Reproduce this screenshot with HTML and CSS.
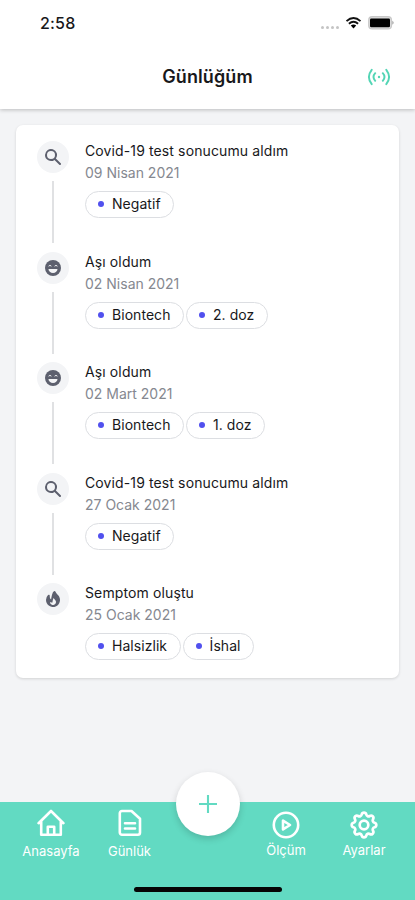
FILE: index.html
```html
<!DOCTYPE html>
<html lang="tr">
<head>
<meta charset="utf-8">
<meta name="viewport" content="width=device-width, initial-scale=1">
<title>Günlüğüm</title>
<link rel="stylesheet" href="styles.css">
</head>
<body>
<svg class="defs" aria-hidden="true">
  <symbol id="search" viewBox="0 0 20 20"><path fill-rule="evenodd" d="M8 4a4 4 0 100 8 4 4 0 000-8zM2 8a6 6 0 1110.89 3.476l4.817 4.817a1 1 0 01-1.414 1.414l-4.816-4.816A6 6 0 012 8z"/></symbol>
  <symbol id="smile" viewBox="0 0 20 20"><circle cx="10" cy="10" r="8"/><path d="M5.6 8.2q1.3-1.7 2.8 0M11.6 8.2q1.3-1.7 2.8 0" fill="none" stroke="#f3f4f6" stroke-width="1"/><path d="M5.5 11h9a4.5 4 0 01-9 0z" fill="#f3f4f6"/></symbol>
  <symbol id="fire" viewBox="0 0 20 20"><path fill-rule="evenodd" d="M12.395 2.553a1 1 0 00-1.45-.385c-.345.23-.614.558-.822.88-.214.33-.403.713-.57 1.116-.334.804-.614 1.768-.84 2.734a31.365 31.365 0 00-.613 3.58 2.64 2.64 0 01-.945-1.067c-.328-.68-.398-1.534-.398-2.654A1 1 0 005.05 6.05 6.981 6.981 0 003 11a7 7 0 1011.95-4.95c-.592-.591-.98-.985-1.348-1.467-.363-.476-.724-1.063-1.207-2.03zM12.12 15.12A3 3 0 017 13s.879.5 2.5.5c0-1 .5-4 1.25-4.5.5 1 .786 1.293 1.371 1.879A2.99 2.99 0 0113 13a2.99 2.99 0 01-.879 2.121z"/></symbol>
</svg>
<div class="screen">
  <header class="header">
    <div class="status">
      <span class="time">2:58</span>
      <div class="indicators">
        <span class="signal"><i></i><i></i><i></i><i></i></span>
        <svg class="wifi" viewBox="0 0 16 12"><path d="M1 4.1Q8-2.1 15 4.1M3.4 6.7Q8 2.7 12.6 6.7" fill="none" stroke="#111" stroke-width="1.9"/><path d="M5.3 8.6Q8 6.4 10.7 8.6L8 11.6z"/></svg>
        <svg class="battery" viewBox="0 0 27 14"><rect x=".7" y=".7" width="22.8" height="12.2" rx="3.5" fill="#ddd" stroke="#c8c8c8" stroke-width="1.2"/><rect x="2" y="2.6" width="20" height="8.6" rx="1.2"/><path d="M24.4 4.8q2.4 2 0 4z" fill="#999"/></svg>
      </div>
    </div>
    <div class="titlebar">
      <h1>Günlüğüm</h1>
      <svg class="radio" viewBox="0 0 24 18"><g fill="none" stroke="#53d5b5" stroke-width="1.9" stroke-linecap="round"><path d="M4.7 1.8Q-.9 9 4.7 16.2M19.3 1.8Q24.9 9 19.3 16.2M8.2 5.2Q4.8 9 8.2 12.8M15.8 5.2Q19.2 9 15.8 12.8"/></g><circle cx="12" cy="9" r="1.2" fill="#53d5b5"/></svg>
    </div>
  </header>
  <main>
    <ol class="card">
      <li class="entry">
        <div class="rail"><span class="marker"><svg><use href="#search"/></svg></span></div>
        <div class="body"><h2>Covid-19 test sonucumu aldım</h2><time>09 Nisan 2021</time><div class="tags"><span class="tag">Negatif</span></div></div>
      </li>
      <li class="entry">
        <div class="rail"><span class="marker"><svg><use href="#smile"/></svg></span></div>
        <div class="body"><h2>Aşı oldum</h2><time>02 Nisan 2021</time><div class="tags"><span class="tag">Biontech</span><span class="tag">2. doz</span></div></div>
      </li>
      <li class="entry">
        <div class="rail"><span class="marker"><svg><use href="#smile"/></svg></span></div>
        <div class="body"><h2>Aşı oldum</h2><time>02 Mart 2021</time><div class="tags"><span class="tag">Biontech</span><span class="tag">1. doz</span></div></div>
      </li>
      <li class="entry">
        <div class="rail"><span class="marker"><svg><use href="#search"/></svg></span></div>
        <div class="body"><h2>Covid-19 test sonucumu aldım</h2><time>27 Ocak 2021</time><div class="tags"><span class="tag">Negatif</span></div></div>
      </li>
      <li class="entry">
        <div class="rail"><span class="marker"><svg><use href="#fire"/></svg></span></div>
        <div class="body"><h2>Semptom oluştu</h2><time>25 Ocak 2021</time><div class="tags"><span class="tag">Halsizlik</span><span class="tag">İshal</span></div></div>
      </li>
    </ol>
  </main>
  <nav class="nav">
    <a class="tab"><svg viewBox="0 0 28 28"><path d="M1.6 14.2 14 2l12.4 12.2M4.2 12.5v13.2h19.6V12.5M10.8 25.5v-7.8h6.4v7.8"/></svg><span>Anasayfa</span></a>
    <a class="tab"><svg viewBox="0 0 28 28"><path d="M6 2h9.5L24 9.8v13.7a2.2 2.2 0 0 1-2.2 2.2H6a2.2 2.2 0 0 1-2.2-2.2V4.2A2.2 2.2 0 0 1 6 2zM9 14.3h10M9 19.5h10"/></svg><span>Günlük</span></a>
    <button class="add" aria-label="Ekle"><svg viewBox="0 0 20 20"><path d="M10 1v18M1 10h18"/></svg></button>
    <a class="tab low"><svg viewBox="0 0 28 28"><circle cx="14" cy="14" r="12.2"/><path d="M11 9.6v8.8l7-4.4z"/></svg><span>Ölçüm</span></a>
    <a class="tab low"><svg viewBox="0 0 24 24"><path stroke-width="2" d="M10.325 4.317c.426-1.756 2.924-1.756 3.35 0a1.724 1.724 0 002.573 1.066c1.543-.94 3.31.826 2.37 2.37a1.724 1.724 0 001.065 2.572c1.756.426 1.756 2.924 0 3.35a1.724 1.724 0 00-1.066 2.573c.94 1.543-.826 3.31-2.37 2.37a1.724 1.724 0 00-2.572 1.065c-.426 1.756-2.924 1.756-3.35 0a1.724 1.724 0 00-2.573-1.066c-1.543.94-3.31-.826-2.37-2.37a1.724 1.724 0 00-1.065-2.572c-1.756-.426-1.756-2.924 0-3.35a1.724 1.724 0 001.066-2.573c-.94-1.543.826-3.31 2.37-2.37.996.608 2.296.07 2.572-1.065z" transform="translate(-2.04 -2.04) scale(1.17)"/><circle cx="12" cy="12" r="3.7" stroke-width="2.3"/></svg><span>Ayarlar</span></a>
    <div class="home-indicator"></div>
  </nav>
</div>
</body>
</html>
```
FILE: styles.css
```css
* { box-sizing: border-box; }
body { margin: 0; font-family: Inter, "Liberation Sans", sans-serif; color: #18181b; }
h1, h2, ol { margin: 0; padding: 0; }
.defs { display: none; }
.screen { height: 900px; display: flex; flex-direction: column; background: #f3f4f6; overflow: hidden; }
.header { height: 109px; background: #fff; box-shadow: 0 1px 4px rgba(0, 0, 0, .23); }
.status { height: 46px; padding: 0 20px 0 40px; display: flex; align-items: center; justify-content: space-between; }
.time { font-size: 16px; font-weight: 500; letter-spacing: .2px; }
.indicators { display: flex; align-items: center; }
.signal { display: flex; gap: 2px; padding: 8px 6px 0 0; }
.signal i { width: 3px; height: 3px; border-radius: 50%; background: #c4c4c4; }
.wifi { width: 17px; height: 12px; margin-right: 6px; }
.battery { width: 27px; height: 14px; }
.titlebar { height: 62px; padding: 0 24px; display: grid; grid-template-columns: 1fr auto 1fr; align-items: center; }
.titlebar h1 { grid-column: 2; font-size: 18px; line-height: 24px; font-weight: 600; letter-spacing: .1px; }
.radio { width: 24px; height: 18px; justify-self: end; }
main { flex: 1; padding: 16px; }
.card { height: 553px; list-style: none; background: #fff; border-radius: 7px; padding: 16px 20px; box-shadow: 0 1px 3px rgba(0, 0, 0, .14); }
.entry { height: 110.5px; display: flex; gap: 16px; }
.rail { width: 33px; display: flex; flex-direction: column; align-items: center; }
.marker { flex: none; width: 32px; height: 32px; border-radius: 50%; background: #f3f4f6; display: flex; align-items: center; justify-content: center; }
.marker svg { width: 20px; height: 20px; fill: #5d606e; }
.rail::after { content: ""; width: 2px; height: 62px; margin-top: 8px; background: #e0e1e3; }
.entry:last-child .rail::after { display: none; }
.body h2 { margin-top: -1px; font-size: 14px; line-height: 22px; font-weight: 400; letter-spacing: .12px; }
.body time { display: block; font-size: 14px; line-height: 22px; color: #858890; }
.tags { display: flex; gap: 2px; margin-top: 7px; }
.tag { height: 27px; padding: 0 12.5px 0 12px; border: 1px solid #dcdee2; border-radius: 14px; display: flex; align-items: center; font-size: 14px; line-height: 24px; padding-bottom: 1px; letter-spacing: .05px; }
.tag::before { content: ""; width: 6px; height: 6px; margin-right: 8px; border-radius: 50%; background: #5150ee; }
.nav { height: 98px; background: #62dac2; display: grid; grid-template-columns: 102px 55px 102px 54px 102px; align-items: start; position: relative; }
.tab { display: flex; flex-direction: column; align-items: center; padding-top: 7px; color: #fff; font-size: 13px; line-height: 18px; }
.tab svg { width: 28px; height: 28px; fill: none; stroke: #fff; stroke-width: 2.6; stroke-linecap: round; stroke-linejoin: round; }
.tab span { margin-top: 5px; }
.tab.low { padding-top: 9px; }
.tab.low span { margin-top: 2px; }
.add { justify-self: center; width: 64px; height: 64px; margin-top: -30px; padding: 0; border: 0; border-radius: 50%; background: #fff; display: flex; align-items: center; justify-content: center; box-shadow: 0 3px 7px rgba(0, 0, 0, .16); }
.add svg { width: 20px; height: 20px; fill: none; stroke: #62dac2; stroke-width: 2.1; }
.home-indicator { position: absolute; left: 134px; bottom: 8px; width: 148px; height: 5px; border-radius: 3px; background: #050505; }
```
